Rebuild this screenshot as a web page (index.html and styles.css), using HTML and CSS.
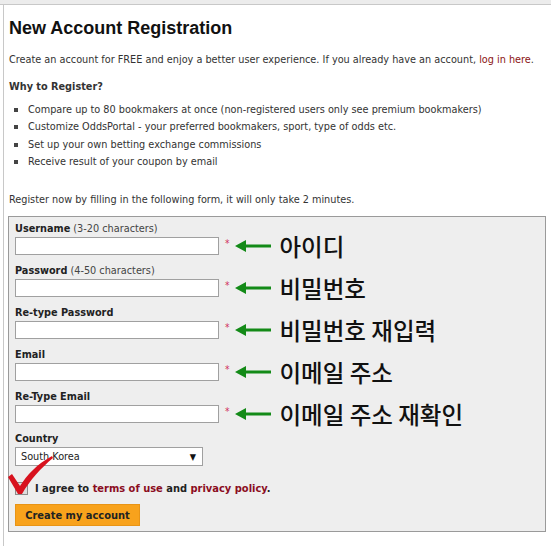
FILE: index.html
```html
<!DOCTYPE html>
<html lang="en">
<head>
    <meta charset="UTF-8">
    <title>New Account Registration</title>
    <link rel="stylesheet" href="styles.css">
</head>
<body>
    <div class="topbar"></div>
    <div class="page">
        <h1>New Account Registration</h1>
        <p>Create an account for FREE and enjoy a better user experience. If you already have an account, <a href="#">log in here</a>.</p>
        <p class="why">Why to Register?</p>
        <ul class="benefits">
            <li>Compare up to 80 bookmakers at once (non-registered users only see premium bookmakers)</li>
            <li>Customize OddsPortal - your preferred bookmakers, sport, type of odds etc.</li>
            <li>Set up your own betting exchange commissions</li>
            <li>Receive result of your coupon by email</li>
        </ul>
        <p class="intro">Register now by filling in the following form, it will only take 2 minutes.</p>

        <div class="form-box">
            <div class="field">
                <label><b>Username</b> (3-20 characters)</label>
                <div class="line">
                    <input type="text">
                    <span class="req">*</span>
                    <svg class="arrow" width="36" height="14" viewBox="0 0 36 14"><path d="M0 7 L11 1 L11 5.5 L36 5.5 L36 8.5 L11 8.5 L11 13 Z" fill="#138a17"/></svg>
                    <span class="ko">아이디</span>
                </div>
            </div>
            <div class="field">
                <label><b>Password</b> (4-50 characters)</label>
                <div class="line">
                    <input type="password">
                    <span class="req">*</span>
                    <svg class="arrow" width="36" height="14" viewBox="0 0 36 14"><path d="M0 7 L11 1 L11 5.5 L36 5.5 L36 8.5 L11 8.5 L11 13 Z" fill="#138a17"/></svg>
                    <span class="ko">비밀번호</span>
                </div>
            </div>
            <div class="field">
                <label><b>Re-type Password</b></label>
                <div class="line">
                    <input type="password">
                    <span class="req">*</span>
                    <svg class="arrow" width="36" height="14" viewBox="0 0 36 14"><path d="M0 7 L11 1 L11 5.5 L36 5.5 L36 8.5 L11 8.5 L11 13 Z" fill="#138a17"/></svg>
                    <span class="ko">비밀번호 재입력</span>
                </div>
            </div>
            <div class="field">
                <label><b>Email</b></label>
                <div class="line">
                    <input type="text">
                    <span class="req">*</span>
                    <svg class="arrow" width="36" height="14" viewBox="0 0 36 14"><path d="M0 7 L11 1 L11 5.5 L36 5.5 L36 8.5 L11 8.5 L11 13 Z" fill="#138a17"/></svg>
                    <span class="ko">이메일 주소</span>
                </div>
            </div>
            <div class="field">
                <label><b>Re-Type Email</b></label>
                <div class="line">
                    <input type="text">
                    <span class="req">*</span>
                    <svg class="arrow" width="36" height="14" viewBox="0 0 36 14"><path d="M0 7 L11 1 L11 5.5 L36 5.5 L36 8.5 L11 8.5 L11 13 Z" fill="#138a17"/></svg>
                    <span class="ko">이메일 주소 재확인</span>
                </div>
            </div>
            <div class="field">
                <label><b>Country</b></label>
                <div class="select">
                    <span>South Korea</span>
                    <span class="caret">&#9660;</span>
                </div>
            </div>
            <div class="agree">
                <span class="checkbox"></span>
                <svg class="tick" width="46" height="40" viewBox="0 0 46 40"><path d="M0 21 L4 18 L12 30 C19 19 29 8 44 0 L45 2 C33 12 22 24 14 38 L10 38 Z" fill="#d8121e"/></svg>
                <span>I agree to <a href="#">terms of use</a> and <a href="#">privacy policy</a>.</span>
            </div>
            <button>Create my account</button>
        </div>
    </div>
</body>
</html>
```

FILE: styles.css
```css
body {
    margin: 0;
    background: white;
    font-family: "DejaVu Sans Condensed", "DejaVu Sans", sans-serif;
    font-size: 10.8px;
    color: #333;
}
.topbar {
    height: 4px;
    background: #ececec;
    border-bottom: 1px solid #c8c8c8;
}
.page {
    margin-left: 3px;
    border-left: 1px solid #c8c8c8;
    padding: 10px 5px 14px 4px;
}
h1 {
    font-family: "Liberation Sans", Arial, sans-serif;
    font-size: 18px;
    font-weight: bold;
    color: #111;
    margin: 3px 0 14px 1px;
}
p {
    margin: 0 0 13px 1px;
    line-height: 14px;
}
a {
    color: #8b1414;
    text-decoration: none;
}
.why {
    font-weight: bold;
    margin-bottom: 7px;
}
.benefits {
    list-style: none;
    margin: 0 0 23px 0;
    padding: 0;
}
.benefits li {
    position: relative;
    padding-left: 20px;
    line-height: 17.3px;
}
.benefits li::before {
    content: "";
    position: absolute;
    left: 6px;
    top: 7px;
    width: 4px;
    height: 4px;
    background: #444;
}
.intro {
    margin-bottom: 9px;
}
.form-box {
    background: #eeeeee;
    border: 1px solid #9a9a9a;
    padding: 4px 6px 5px 6px;
}
.field {
    margin-bottom: 8px;
}
.field label {
    display: block;
    line-height: 16px;
    color: #444;
}
.field label b {
    color: #222;
}
.line {
    display: flex;
    align-items: center;
    height: 18px;
}
.line input {
    box-sizing: border-box;
    width: 204px;
    height: 18px;
    margin: 0;
    border: 1px solid #a0a0a0;
    background: white;
    padding: 0 3px;
}
.req {
    color: #d0305a;
    font-size: 10px;
    margin: -6px 0 0 6px;
}
.arrow {
    margin-left: 5px;
}
.ko {
    font-family: "Noto Sans CJK KR", sans-serif;
    font-size: 23.5px;
    font-weight: 500;
    color: #111;
    margin-left: 9px;
    white-space: nowrap;
}
.select {
    box-sizing: border-box;
    width: 188px;
    height: 19px;
    border: 1px solid #a0a0a0;
    background: white;
    display: flex;
    justify-content: space-between;
    align-items: center;
    padding: 0 6px 0 5px;
    color: #222;
}
.caret {
    font-size: 9px;
    color: #111;
}
.agree {
    position: relative;
    display: flex;
    align-items: center;
    margin: 14px 0 8px 0;
    height: 16px;
    font-size: 11px;
    font-weight: bold;
    color: #222;
}
.agree a {
    color: #8b0d1e;
}
.checkbox {
    width: 11px;
    height: 11px;
    border: 1px solid #8c8c8c;
    background: #ddd;
    margin-right: 7px;
}
.tick {
    position: absolute;
    left: -7px;
    top: -24px;
}
button {
    display: block;
    width: 125px;
    height: 22px;
    background: #f8a21c;
    border: 1px solid #e89416;
    color: #222;
    font-family: "DejaVu Sans Condensed", "DejaVu Sans", sans-serif;
    font-size: 11px;
    font-weight: bold;
    padding: 0;
    cursor: pointer;
}
```
